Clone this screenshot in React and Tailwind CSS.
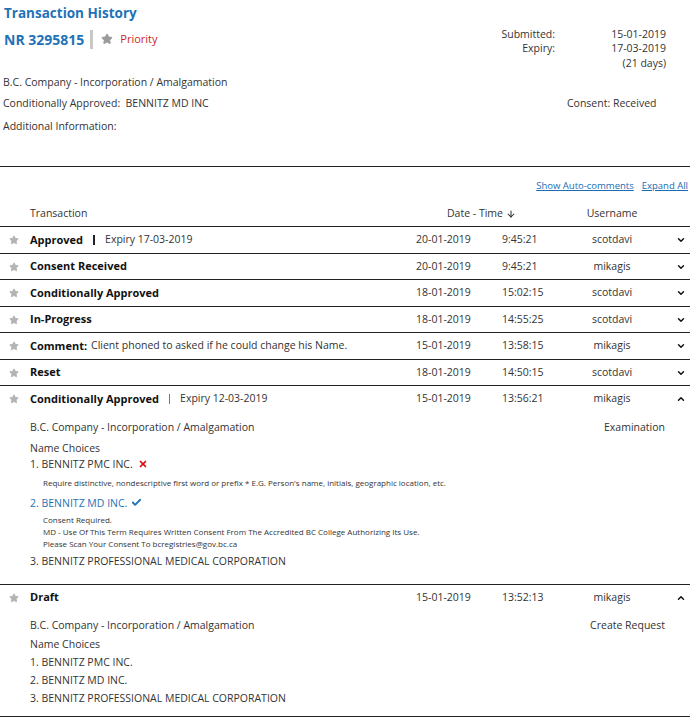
import React from 'react';
import { Star, ChevronDown, ChevronUp, Check, X, ArrowDown } from 'lucide-react';

const font = { fontFamily: '"Segoe UI", "Open Sans", "Liberation Sans", sans-serif' };

const rows = [
  { title: 'Approved', extra: 'Expiry 17-03-2019', bar: 'thick', date: '20-01-2019', time: '9:45:21', user: 'scotdavi' },
  { title: 'Consent Received', date: '20-01-2019', time: '9:45:21', user: 'mikagis' },
  { title: 'Conditionally Approved', date: '18-01-2019', time: '15:02:15', user: 'scotdavi' },
  { title: 'In-Progress', date: '18-01-2019', time: '14:55:25', user: 'scotdavi' },
  { title: 'Comment:', comment: 'Client phoned to asked if he could change his Name.', date: '15-01-2019', time: '13:58:15', user: 'mikagis' },
  { title: 'Reset', date: '18-01-2019', time: '14:50:15', user: 'scotdavi' },
];

function RowHead({ r, open }) {
  return (
    <div className="flex items-center h-[26.5px] border-t border-[#222]">
      <div className="w-[30px] pl-[9px] flex items-center">
        <Star size={10} className="text-[#b3b3b3] fill-[#b3b3b3]" />
      </div>
      <div className="flex-1 flex items-center">
        <span className="font-bold text-[11px] text-[#111]">{r.title}</span>
        {r.comment && <span className="ml-1">{r.comment}</span>}
        {r.extra && (
          <>
            {r.bar === 'thick' ? (
              <span className="mx-[10px] w-[2px] h-[10px] bg-[#222]" />
            ) : (
              <span className="mx-[10px] w-px h-[10px] bg-[#777]" />
            )}
            <span>{r.extra}</span>
          </>
        )}
      </div>
      <div className="w-[86px]">{r.date}</div>
      <div className="w-[60px]">{r.time}</div>
      <div className="w-[100px] text-center">{r.user}</div>
      <div className="w-[28px] pl-[14px] flex items-center">
        {open ? (
          <ChevronUp size={10} strokeWidth={3.5} className="text-[#111]" />
        ) : (
          <ChevronDown size={10} strokeWidth={3.5} className="text-[#111]" />
        )}
      </div>
    </div>
  );
}

export default function App() {
  return (
    <div className="w-[690px] h-[720px] bg-white text-[#333] text-[10.5px] overflow-hidden" style={font}>
      {/* header */}
      <div className="flex justify-between">
        <div className="pl-[4px] pt-[3px]">
          <h1 className="text-[13.5px] font-bold text-[#1f72b8] leading-[20px]">Transaction History</h1>
          <div className="flex items-center mt-[6px] h-[20px]">
            <span className="text-[14px] font-bold text-[#1f72b8]">NR 3295815</span>
            <span className="ml-[6px] w-[3px] h-[19px] bg-[#c8c8c8]" />
            <Star size={12} className="ml-[8px] text-[#9a9a9a] fill-[#9a9a9a]" />
            <span className="ml-[7px] text-[11px] text-[#cc1f1f]">Priority</span>
          </div>
        </div>
        <div className="pt-[27px] pr-[24px] flex leading-[14px]">
          <div className="text-right">
            <div>Submitted:</div>
            <div>Expiry:</div>
          </div>
          <div className="w-[111px] text-right">
            <div>15-01-2019</div>
            <div>17-03-2019</div>
            <div className="mt-[1px]">(21 days)</div>
          </div>
        </div>
      </div>

      <div className="pl-[3px] mt-[2px] leading-[21px]">
        <div>B.C. Company - Incorporation / Amalgamation</div>
        <div className="flex">
          <span className="flex-1">Conditionally Approved:&nbsp; BENNITZ MD INC</span>
          <span className="w-[123px]">Consent: Received</span>
        </div>
        <div className="mt-[2px]">Additional Information:</div>
      </div>

      <div className="mt-[29px] border-t border-[#222]" />

      <div className="flex justify-end gap-[8px] pr-[2px] mt-[12px] text-[9.5px] text-[#1a6cb4]">
        <span className="underline">Show Auto-comments</span>
        <span className="underline">Expand All</span>
      </div>

      {/* table header */}
      <div className="flex items-center h-[25px] mt-[8px]">
        <div className="w-[30px]" />
        <div className="flex-1">Transaction</div>
        <div className="w-[146px] pl-[31px] flex items-center">
          Date - Time
          <ArrowDown size={10} strokeWidth={2.5} className="ml-[3px]" />
        </div>
        <div className="w-[100px] text-center">Username</div>
        <div className="w-[28px]" />
      </div>

      {rows.map((r, i) => (
        <RowHead key={i} r={r} />
      ))}

      {/* expanded: conditionally approved */}
      <RowHead
        r={{ title: 'Conditionally Approved', extra: 'Expiry 12-03-2019', date: '15-01-2019', time: '13:56:21', user: 'mikagis' }}
        open
      />
      <div className="pl-[30px] pr-[25px] pt-[7px] h-[172px]">
        <div className="flex justify-between leading-[16px]">
          <span>B.C. Company - Incorporation / Amalgamation</span>
          <span>Examination</span>
        </div>
        <div className="mt-[5px] leading-[16px]">Name Choices</div>
        <div className="flex items-center leading-[16px]">
          1. BENNITZ PMC INC.
          <X size={10} strokeWidth={4} className="ml-[5px] text-[#e00000]" />
        </div>
        <div className="pl-[13px] mt-[5px] text-[8px] leading-[12px]">
          Require distinctive, nondescriptive first word or prefix * E.G. Person's name, initials, geographic location, etc.
        </div>
        <div className="flex items-center mt-[6px] leading-[16px] text-[#1f72b8]">
          2. BENNITZ MD INC.
          <Check size={11} strokeWidth={4} className="ml-[4px] text-[#1f72b8]" />
        </div>
        <div className="pl-[13px] mt-[3px] text-[8px] leading-[12px]">
          <div>Consent Required.</div>
          <div>MD - Use Of This Term Requires Written Consent From The Accredited BC College Authorizing Its Use.</div>
          <div>Please Scan Your Consent To bcregistries@gov.bc.ca</div>
        </div>
        <div className="mt-[3px] leading-[16px]">3. BENNITZ PROFESSIONAL MEDICAL CORPORATION</div>
      </div>

      {/* expanded: draft */}
      <RowHead r={{ title: 'Draft', date: '15-01-2019', time: '13:52:13', user: 'mikagis' }} open />
      <div className="pl-[30px] pr-[25px] pt-[6px] h-[106.5px] leading-[18px] border-b border-[#222]">
        <div className="flex justify-between">
          <span>B.C. Company - Incorporation / Amalgamation</span>
          <span>Create Request</span>
        </div>
        <div className="mt-[1px]">Name Choices</div>
        <div>1. BENNITZ PMC INC.</div>
        <div>2. BENNITZ MD INC.</div>
        <div>3. BENNITZ PROFESSIONAL MEDICAL CORPORATION</div>
      </div>
    </div>
  );
}
